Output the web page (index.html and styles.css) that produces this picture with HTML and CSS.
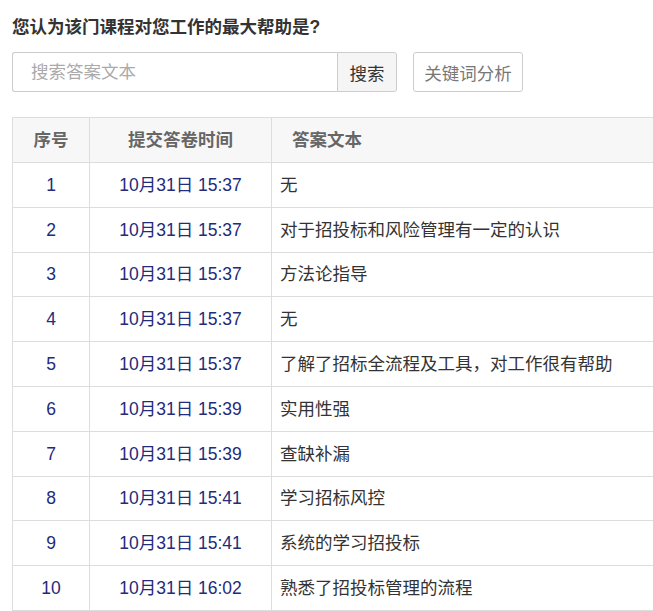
FILE: index.html
```html
<!DOCTYPE html>
<html lang="zh">
<head>
<meta charset="utf-8">
<link rel="stylesheet" href="styles.css">
</head>
<body>
<div class="page">
  <h3 class="question">您认为该门课程对您工作的最大帮助是?</h3>
  <div class="toolbar">
    <div class="search">
      <input class="search-input" type="text" placeholder="搜索答案文本">
      <button class="search-btn">搜索</button>
    </div>
    <button class="kw-btn">关键词分析</button>
  </div>
  <div class="table-wrap">
    <table class="answers">
      <thead>
        <tr><th class="c-no">序号</th><th class="c-time">提交答卷时间</th><th class="c-text">答案文本</th></tr>
      </thead>
      <tbody>
        <tr><td class="c-no">1</td><td class="c-time">10月31日 15:37</td><td class="c-text">无</td></tr>
        <tr><td class="c-no">2</td><td class="c-time">10月31日 15:37</td><td class="c-text">对于招投标和风险管理有一定的认识</td></tr>
        <tr><td class="c-no">3</td><td class="c-time">10月31日 15:37</td><td class="c-text">方法论指导</td></tr>
        <tr><td class="c-no">4</td><td class="c-time">10月31日 15:37</td><td class="c-text">无</td></tr>
        <tr><td class="c-no">5</td><td class="c-time">10月31日 15:37</td><td class="c-text">了解了招标全流程及工具，对工作很有帮助</td></tr>
        <tr><td class="c-no">6</td><td class="c-time">10月31日 15:39</td><td class="c-text">实用性强</td></tr>
        <tr><td class="c-no">7</td><td class="c-time">10月31日 15:39</td><td class="c-text">查缺补漏</td></tr>
        <tr><td class="c-no">8</td><td class="c-time">10月31日 15:41</td><td class="c-text">学习招标风控</td></tr>
        <tr><td class="c-no">9</td><td class="c-time">10月31日 15:41</td><td class="c-text">系统的学习招投标</td></tr>
        <tr><td class="c-no">10</td><td class="c-time">10月31日 16:02</td><td class="c-text">熟悉了招投标管理的流程</td></tr>
      </tbody>
    </table>
  </div>
</div>
</body>
</html>
```
FILE: styles.css
```css
html, body {
  margin: 0;
  padding: 0;
  background: #fff;
  overflow: hidden;
}
body {
  font-family: "Liberation Sans", "Noto Sans CJK SC", sans-serif;
  color: #333;
}
.page {
  padding: 15px 0 0 12px;
}
.question {
  margin: 0;
  font-size: 17.5px;
  line-height: 24px;
  font-weight: bold;
  color: #333;
}
.toolbar {
  display: flex;
  align-items: center;
  gap: 16px;
  margin-top: 13px;
}
.search {
  display: flex;
}
.search-input {
  box-sizing: border-box;
  width: 325px;
  height: 40px;
  border: 1px solid #ccc;
  border-right: none;
  border-radius: 3px 0 0 3px;
  padding: 0 18px;
  font-family: inherit;
  font-size: 17.5px;
  color: #333;
  outline: none;
}
.search-input::placeholder {
  color: #aaa;
}
.search-btn {
  box-sizing: border-box;
  width: 60px;
  height: 40px;
  border: 1px solid #ccc;
  border-radius: 0 3px 3px 0;
  background: #f5f5f5;
  font-family: inherit;
  font-size: 17.5px;
  color: #333;
  padding: 0;
}
.kw-btn {
  box-sizing: border-box;
  width: 110px;
  height: 40px;
  border: 1px solid #ccc;
  border-radius: 3px;
  background: #fff;
  font-family: inherit;
  font-size: 17.5px;
  color: #777;
  padding: 0;
}
.table-wrap {
  margin-top: 25px;
  width: 720px;
}
.answers {
  width: 720px;
  border-collapse: collapse;
  font-size: 17.5px;
  line-height: 24px;
}
.answers th, .answers td {
  border: 1px solid #ddd;
  padding: 0;
  box-sizing: border-box;
  vertical-align: middle;
}
.answers th {
  height: 45px;
  background: #f7f7f7;
  color: #666;
  font-weight: bold;
}
.answers td {
  height: 44.8px;
}
.answers td.c-no, .answers td.c-time {
  color: #232b7a;
  text-align: center;
}
.c-no { width: 77px; }
.c-time { width: 182px; }
.answers th.c-text {
  text-align: left;
  padding-left: 20px;
}
.answers td.c-text {
  text-align: left;
  padding-left: 8px;
  color: #333;
}
```
